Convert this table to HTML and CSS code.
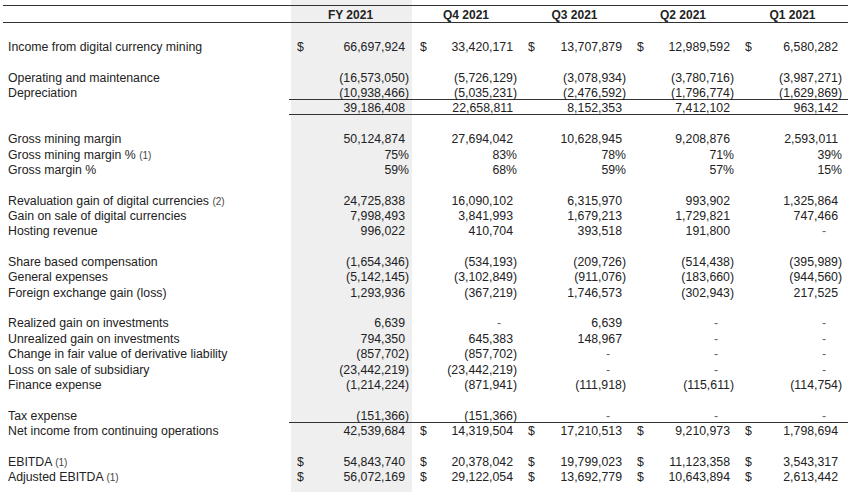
FILE: index.html
```html
<!DOCTYPE html>
<html>
<head>
<meta charset="utf-8">
<link rel="stylesheet" href="styles.css">
</head>
<body>
<table class="fin">
  <colgroup>
    <col class="c-label"><col class="c-fy"><col class="c-q4"><col class="c-q3"><col class="c-q2"><col class="c-q1">
  </colgroup>
  <thead>
    <tr class="head">
      <th></th><th>FY 2021</th><th>Q4 2021</th><th>Q3 2021</th><th>Q2 2021</th><th>Q1 2021</th>
    </tr>
  </thead>
  <tbody>
    <tr class="spacer"><td colspan="6"></td></tr>
    <tr>
      <td class="lbl">Income from digital currency mining</td>
      <td class="v"><span class="cur">$</span><span class="n">66,697,924</span></td>
      <td class="v"><span class="cur">$</span><span class="n">33,420,171</span></td>
      <td class="v"><span class="cur">$</span><span class="n">13,707,879</span></td>
      <td class="v"><span class="cur">$</span><span class="n">12,989,592</span></td>
      <td class="v last"><span class="cur">$</span><span class="n">6,580,282</span></td>
    </tr>
    <tr class="blank"><td colspan="6"></td></tr>
    <tr>
      <td class="lbl">Operating and maintenance</td>
      <td class="v">(16,573,050)</td><td class="v">(5,726,129)</td><td class="v">(3,078,934)</td><td class="v">(3,780,716)</td><td class="v last">(3,987,271)</td>
    </tr>
    <tr>
      <td class="lbl">Depreciation</td>
      <td class="v">(10,938,466)</td><td class="v">(5,035,231)</td><td class="v">(2,476,592)</td><td class="v">(1,796,774)</td><td class="v last">(1,629,869)</td>
    </tr>
    <tr class="subtotal">
      <td class="lbl"></td>
      <td class="v"><span class="n">39,186,408</span></td><td class="v"><span class="n">22,658,811</span></td><td class="v"><span class="n">8,152,353</span></td><td class="v"><span class="n">7,412,102</span></td><td class="v last"><span class="n">963,142</span></td>
    </tr>
    <tr class="blank"><td colspan="6"></td></tr>
    <tr>
      <td class="lbl">Gross mining margin</td>
      <td class="v"><span class="n">50,124,874</span></td><td class="v"><span class="n">27,694,042</span></td><td class="v"><span class="n">10,628,945</span></td><td class="v"><span class="n">9,208,876</span></td><td class="v last"><span class="n">2,593,011</span></td>
    </tr>
    <tr>
      <td class="lbl">Gross mining margin % <span class="note">(1)</span></td>
      <td class="v">75%</td><td class="v">83%</td><td class="v">78%</td><td class="v">71%</td><td class="v last">39%</td>
    </tr>
    <tr>
      <td class="lbl">Gross margin %</td>
      <td class="v">59%</td><td class="v">68%</td><td class="v">59%</td><td class="v">57%</td><td class="v last">15%</td>
    </tr>
    <tr class="blank"><td colspan="6"></td></tr>
    <tr>
      <td class="lbl">Revaluation gain of digital currencies <span class="note">(2)</span></td>
      <td class="v"><span class="n">24,725,838</span></td><td class="v"><span class="n">16,090,102</span></td><td class="v"><span class="n">6,315,970</span></td><td class="v"><span class="n">993,902</span></td><td class="v last"><span class="n">1,325,864</span></td>
    </tr>
    <tr>
      <td class="lbl">Gain on sale of digital currencies</td>
      <td class="v"><span class="n">7,998,493</span></td><td class="v"><span class="n">3,841,993</span></td><td class="v"><span class="n">1,679,213</span></td><td class="v"><span class="n">1,729,821</span></td><td class="v last"><span class="n">747,466</span></td>
    </tr>
    <tr>
      <td class="lbl">Hosting revenue</td>
      <td class="v"><span class="n">996,022</span></td><td class="v"><span class="n">410,704</span></td><td class="v"><span class="n">393,518</span></td><td class="v"><span class="n">191,800</span></td><td class="v last"><span class="d">-</span></td>
    </tr>
    <tr class="blank"><td colspan="6"></td></tr>
    <tr>
      <td class="lbl">Share based compensation</td>
      <td class="v">(1,654,346)</td><td class="v">(534,193)</td><td class="v">(209,726)</td><td class="v">(514,438)</td><td class="v last">(395,989)</td>
    </tr>
    <tr>
      <td class="lbl">General expenses</td>
      <td class="v">(5,142,145)</td><td class="v">(3,102,849)</td><td class="v">(911,076)</td><td class="v">(183,660)</td><td class="v last">(944,560)</td>
    </tr>
    <tr>
      <td class="lbl">Foreign exchange gain (loss)</td>
      <td class="v"><span class="n">1,293,936</span></td><td class="v">(367,219)</td><td class="v"><span class="n">1,746,573</span></td><td class="v">(302,943)</td><td class="v last"><span class="n">217,525</span></td>
    </tr>
    <tr class="blank"><td colspan="6"></td></tr>
    <tr>
      <td class="lbl">Realized gain on investments</td>
      <td class="v"><span class="n">6,639</span></td><td class="v"><span class="d">-</span></td><td class="v"><span class="n">6,639</span></td><td class="v"><span class="d">-</span></td><td class="v last"><span class="d">-</span></td>
    </tr>
    <tr>
      <td class="lbl">Unrealized gain on investments</td>
      <td class="v"><span class="n">794,350</span></td><td class="v"><span class="n">645,383</span></td><td class="v"><span class="n">148,967</span></td><td class="v"><span class="d">-</span></td><td class="v last"><span class="d">-</span></td>
    </tr>
    <tr>
      <td class="lbl">Change in fair value of derivative liability</td>
      <td class="v">(857,702)</td><td class="v">(857,702)</td><td class="v"><span class="d">-</span></td><td class="v"><span class="d">-</span></td><td class="v last"><span class="d">-</span></td>
    </tr>
    <tr>
      <td class="lbl">Loss on sale of subsidiary</td>
      <td class="v">(23,442,219)</td><td class="v">(23,442,219)</td><td class="v"><span class="d">-</span></td><td class="v"><span class="d">-</span></td><td class="v last"><span class="d">-</span></td>
    </tr>
    <tr>
      <td class="lbl">Finance expense</td>
      <td class="v">(1,214,224)</td><td class="v">(871,941)</td><td class="v">(111,918)</td><td class="v">(115,611)</td><td class="v last">(114,754)</td>
    </tr>
    <tr class="blank"><td colspan="6"></td></tr>
    <tr>
      <td class="lbl">Tax expense</td>
      <td class="v">(151,366)</td><td class="v">(151,366)</td><td class="v"><span class="d">-</span></td><td class="v"><span class="d">-</span></td><td class="v last"><span class="d">-</span></td>
    </tr>
    <tr class="total">
      <td class="lbl">Net income from continuing operations</td>
      <td class="v"><span class="n">42,539,684</span></td>
      <td class="v"><span class="cur">$</span><span class="n">14,319,504</span></td>
      <td class="v"><span class="cur">$</span><span class="n">17,210,513</span></td>
      <td class="v"><span class="cur">$</span><span class="n">9,210,973</span></td>
      <td class="v last"><span class="cur">$</span><span class="n">1,798,694</span></td>
    </tr>
    <tr class="blank"><td colspan="6"></td></tr>
    <tr>
      <td class="lbl">EBITDA <span class="note">(1)</span></td>
      <td class="v"><span class="cur">$</span><span class="n">54,843,740</span></td>
      <td class="v"><span class="cur">$</span><span class="n">20,378,042</span></td>
      <td class="v"><span class="cur">$</span><span class="n">19,799,023</span></td>
      <td class="v"><span class="cur">$</span><span class="n">11,123,358</span></td>
      <td class="v last"><span class="cur">$</span><span class="n">3,543,317</span></td>
    </tr>
    <tr>
      <td class="lbl">Adjusted EBITDA <span class="note">(1)</span></td>
      <td class="v"><span class="cur">$</span><span class="n">56,072,169</span></td>
      <td class="v"><span class="cur">$</span><span class="n">29,122,054</span></td>
      <td class="v"><span class="cur">$</span><span class="n">13,692,779</span></td>
      <td class="v"><span class="cur">$</span><span class="n">10,643,894</span></td>
      <td class="v last"><span class="cur">$</span><span class="n">2,613,442</span></td>
    </tr>
  </tbody>
</table>
</body>
</html>
```

FILE: styles.css
```css
html, body {
  margin: 0;
  padding: 0;
}
body {
  background: linear-gradient(to right, #ffffff 291px, #efefef 291px, #efefef 412px, #ffffff 412px);
  min-height: 492px;
  font-family: "Liberation Sans", Arial, sans-serif;
  color: #222;
}
.fin {
  margin: 5px 0 0 3px;
  width: 845px;
  table-layout: fixed;
  border-collapse: separate;
  border-spacing: 0;
  font-size: 12.3px;
  line-height: 12.36px;
}
.c-label { width: 286px; }
.c-fy { width: 123px; }
.c-q4 { width: 108px; }
.c-q3 { width: 109px; }
.c-q2 { width: 108px; }
.c-q1 { width: 111px; }
.fin th, .fin td {
  padding: 3px 0 0 0;
  white-space: nowrap;
  vertical-align: top;
}
.head th {
  padding: 2px 0 0 0;
  font-size: 12px;
  font-weight: bold;
  text-align: center;
  box-shadow: inset 0 1px #333, inset 0 -1px #333;
  line-height: 16px;
}
.spacer td { height: 15px; padding: 0; }
.blank td { height: 15.36px; padding: 0; }
.lbl {
  padding-left: 5px !important;
  text-align: left;
}
.note {
  font-size: 10px;
  line-height: 0;
  color: #444;
}
.v {
  text-align: right;
  padding-right: 3px !important;
}
.v.last { padding-right: 6px !important; }
.cur {
  float: left;
  padding-left: 8px;
}
.n { padding-right: 4px; }
.d {
  padding-right: 16px;
  color: #666;
}
.subtotal .v {
  box-shadow: inset 0 1px #333, inset 0 -1px #333;
}
.total .v {
  box-shadow: inset 0 1px #333;
}
```
